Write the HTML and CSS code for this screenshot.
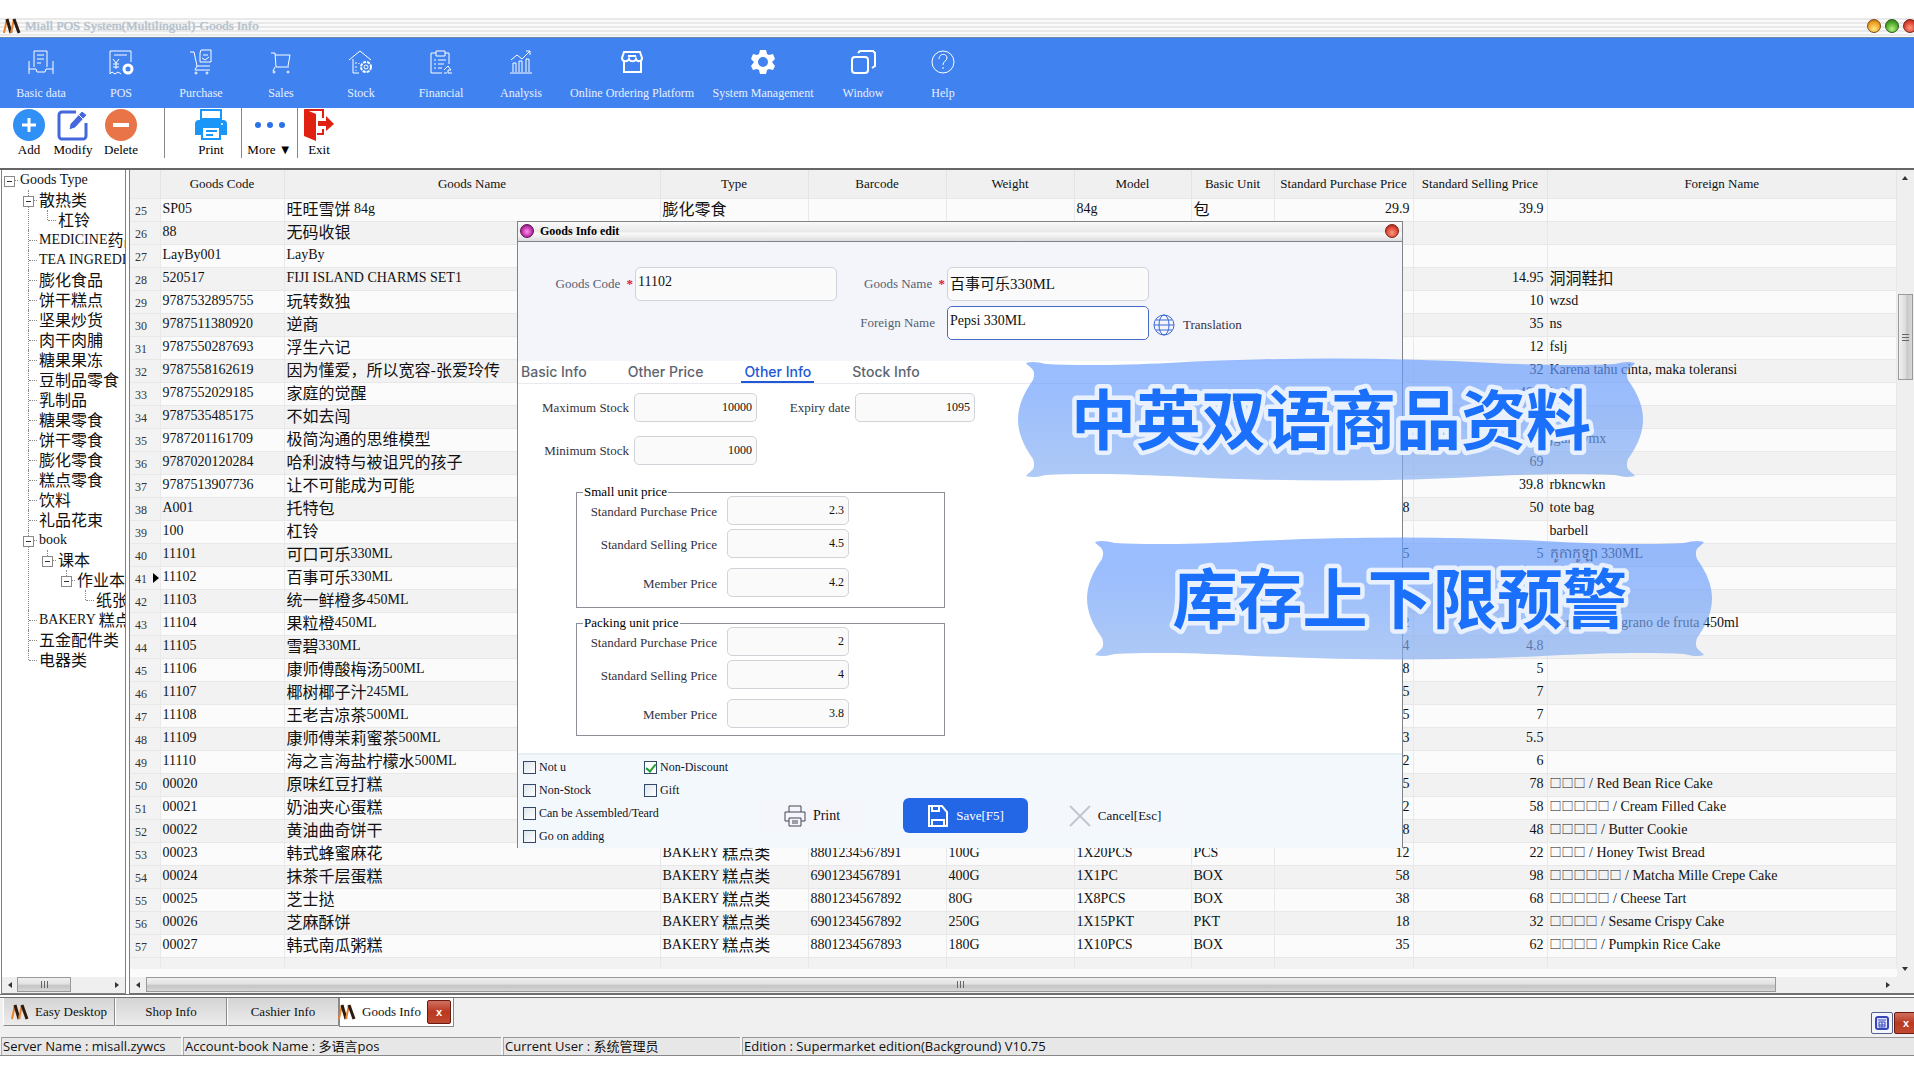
FILE: index.html
```html
<!DOCTYPE html>
<html lang="en">
<head>
<meta charset="utf-8">
<title>Miall POS System(Multilingual)-Goods Info</title>
<link rel="stylesheet" href="styles.css">
</head>
<body>
<svg class="defs" width="0" height="0" aria-hidden="true">
  <defs>
    <linearGradient id="ribbon-fill" x1="0" y1="0" x2="0" y2="1">
      <stop offset="0" stop-color="#649bff"/><stop offset=".3" stop-color="#689cfc"/><stop offset="1" stop-color="#85aef0"/>
    </linearGradient>
    <symbol id="logo" viewBox="0 0 18 16">
      <path d="M4 1L1 15" stroke="#e8832a" stroke-width="2" fill="none"/>
      <path d="M4 1l4 14" stroke="#2a1a10" stroke-width="3" fill="none"/>
      <path d="M11 1L8 15" stroke="#e8832a" stroke-width="2" fill="none"/>
      <path d="M11 1l5 14" stroke="#2a1a10" stroke-width="3" fill="none"/>
    </symbol>
    <symbol id="ribbon" viewBox="0 0 625 123">
      <path d="M8 5C14 3 20 4 28 6C60 8 110 7 150 5C260 -1 370 -1 475 5C515 7 565 8 597 6C605 4 611 3 617 5C614 10 606 10 610 22C630 50 630 73 610 101C606 113 614 113 617 118C611 120 605 119 597 117C565 115 515 116 475 118C370 124 260 124 150 118C110 116 60 115 28 117C20 119 14 120 8 118C11 113 19 113 15 101C-5 73 -5 50 15 22C19 10 11 10 8 5Z" fill="url(#ribbon-fill)" fill-opacity=".66"/>
    </symbol>
  </defs>
</svg>

<header class="titlebar">
  <svg class="logo" width="18" height="16"><use href="#logo"/></svg>
  <span class="titlebar-text">Miall POS System(Multilingual)-Goods Info</span>
  <button class="orb orb-yellow" aria-label="Minimize"></button>
  <button class="orb orb-green" aria-label="Restore"></button>
  <button class="orb orb-red" aria-label="Close"></button>
</header>

<nav class="mainnav">
  <button class="nav-item"><svg width="26" height="26" viewBox="0 0 26 26"><path d="M6 18V2h13v16M9 6h7M9 10h7M9 14h4M1 12v13M25 12v13M1 20h7l1 3h8l1-3h7"/></svg>Basic data</button>
  <button class="nav-item"><svg width="26" height="26" viewBox="0 0 26 26"><path d="M13 25l-3-2-3 2-3-2-2 2V2h21v11M6 6h13M5 10l3 4 3-4M8 14v6M5 15h6M5 18h6"/><circle cx="20" cy="20" r="4" stroke-width="3"/></svg>POS</button>
  <button class="nav-item"><svg width="26" height="26" viewBox="0 0 26 26"><path d="M2 3h4l3 14h13M13 1h10v12H12V4zM15 6h5M14 9l3 2 4-3M9 17l-2 4h15"/><circle cx="8" cy="24" r="1"/><circle cx="19" cy="24" r="1"/></svg>Purchase</button>
  <button class="nav-item"><svg width="26" height="26" viewBox="0 0 26 26"><path d="M3 4h4l1 14h13M7 6h15l-2 11M7 18l-2 4"/><circle cx="6" cy="23" r="1"/><circle cx="20" cy="23" r="1"/></svg>Sales</button>
  <button class="nav-item"><svg width="26" height="26" viewBox="0 0 26 26"><path d="M1 11L12 2l11 9M5 10v14h6M8 13v2M8 17v2M8 21v1M11 14v1"/><circle cx="18" cy="18" r="5" stroke-width="2" stroke-dasharray="3 1"/><circle cx="18" cy="18" r="2"/></svg>Stock</button>
  <button class="nav-item"><svg width="26" height="26" viewBox="0 0 26 26"><path d="M8 4H3v20h11M17 4h4v11M8 2h9v5H8zM6 11h2M10 11h8M6 15h2M10 15h6M6 19h2M10 19h4M16 21l4-4 3 4h-3v3h4M16 24h3"/></svg>Financial</button>
  <button class="nav-item"><svg width="26" height="26" viewBox="0 0 26 26"><path d="M2 24h22M5 23V14h3v9M11 23V12h3v11M18 23V10h3v13M3 11l6-5 5 4 8-8M18 2h4v4" /></svg>Analysis</button>
  <button class="nav-item nav-wide"><svg width="26" height="26" viewBox="0 0 26 26"><path stroke-width="2" d="M5 3h16l2 6c0 4-5 4-6 1c-1 3-6 3-7 0c-1 3-7 3-7-1zM5 12v11h17V12M9 7h8"/></svg>Online Ordering Platform</button>
  <button class="nav-item nav-mid"><svg width="26" height="26" viewBox="0 0 26 26"><path fill="#fff" stroke="none" fill-rule="evenodd" d="M10 1h6l1 4 2 1 4-1 2 5-3 3 3 4-2 4-4-1-2 1-1 4h-6l-1-4-2-1-4 1-2-4 3-4-3-3 2-5 4 1 2-1zM13 8a5 5 0 1 0 0 10a5 5 0 0 0 0-10z"/></svg>System Management</button>
  <button class="nav-item"><svg width="26" height="26" viewBox="0 0 26 26"><rect x="2" y="8" width="16" height="16" rx="3" stroke-width="2"/><path stroke-width="2" d="M8 4l2-2h13l2 2v13l-3 2"/></svg>Window</button>
  <button class="nav-item"><svg width="26" height="26" viewBox="0 0 26 26"><circle cx="13" cy="13" r="11"/><path d="M9 10c0-6 8-6 8-1c0 3-4 3-4 7M13 18v2"/></svg>Help</button>
</nav>

<div class="toolbar">
  <button class="tool tool-add"><svg width="32" height="32" viewBox="0 0 32 32"><circle cx="16" cy="16" r="16" fill="#3090f5"/><path d="M16 9v14M9 16h14" stroke="#fff" stroke-width="3"/></svg>Add</button>
  <button class="tool tool-modify"><svg width="32" height="32" viewBox="0 0 32 32"><path d="M19 3H5a3 3 0 0 0-3 3v21a3 3 0 0 0 3 3h21a3 3 0 0 0 3-3V14" fill="none" stroke="#4468dc" stroke-width="3"/><path d="M12 21l1-6L25 2l5 4-12 13zM22 6l4 4" fill="#4468dc" stroke="#fff" stroke-width="1"/></svg>Modify</button>
  <button class="tool tool-delete"><svg width="32" height="32" viewBox="0 0 32 32"><circle cx="16" cy="16" r="16" fill="#e87448"/><path d="M8 16h16" stroke="#fff" stroke-width="4"/></svg>Delete</button>
  <span class="rule"></span>
  <button class="tool tool-print"><svg width="32" height="32" viewBox="0 0 32 32"><path d="M6 10V1h20v9z" fill="#fff" stroke="#1a96f8" stroke-width="2"/><path d="M4 11h24q4 0 4 4v11h-6v-7H7v7H0V15q0-4 4-4z" fill="#1a96f8"/><path d="M7 18h18v12H7z" fill="#fff" stroke="#1a96f8" stroke-width="2"/><path d="M11 22h11M11 26h7" stroke="#1a96f8" stroke-width="2"/><circle cx="27" cy="15" r="1" fill="#fff"/></svg>Print</button>
  <span class="rule"></span>
  <button class="tool tool-more"><svg width="32" height="32" viewBox="0 0 32 32"><g fill="#2a72e8"><circle cx="4" cy="16" r="3"/><circle cx="16" cy="16" r="3"/><circle cx="28" cy="16" r="3"/></g></svg>More ▼</button>
  <span class="rule"></span>
  <button class="tool tool-exit"><svg width="32" height="32" viewBox="0 0 32 32"><path d="M1 0l12 5v27L1 27z" fill="#e02010"/><path d="M2 1h18v8M20 20v5h-6" fill="none" stroke="#e02010" stroke-width="2"/><path d="M15 12h8V7l8 8-8 7v-5h-8z" fill="#e02010"/></svg>Exit</button>
</div>

<main class="workspace">
  <aside class="tree-pane">
    <ul class="tree tree-root">
      <li><span class="node open">Goods Type</span>
        <ul class="tree">
          <li><span class="node open zh">散热类</span>
            <ul class="tree"><li><span class="node zh">杠铃</span></li></ul></li>
          <li><span class="node">MEDICINE<span class="zh">药品</span></span></li>
          <li><span class="node">TEA INGREDIENT</span></li>
          <li><span class="node zh">膨化食品</span></li>
          <li><span class="node zh">饼干糕点</span></li>
          <li><span class="node zh">坚果炒货</span></li>
          <li><span class="node zh">肉干肉脯</span></li>
          <li><span class="node zh">糖果果冻</span></li>
          <li><span class="node zh">豆制品零食</span></li>
          <li><span class="node zh">乳制品</span></li>
          <li><span class="node zh">糖果零食</span></li>
          <li><span class="node zh">饼干零食</span></li>
          <li><span class="node zh">膨化零食</span></li>
          <li><span class="node zh">糕点零食</span></li>
          <li><span class="node zh">饮料</span></li>
          <li><span class="node zh">礼品花束</span></li>
          <li><span class="node open">book</span>
            <ul class="tree"><li><span class="node open zh">课本</span>
              <ul class="tree"><li><span class="node open zh">作业本</span>
                <ul class="tree"><li><span class="node zh">纸张</span></li></ul></li></ul></li></ul></li>
          <li><span class="node">BAKERY <span class="zh">糕点类</span></span></li>
          <li><span class="node zh">五金配件类</span></li>
          <li><span class="node zh">电器类</span></li>
        </ul>
      </li>
    </ul>
    <div class="hbar tree-hbar"><span class="arrow left"></span><span class="hthumb tree-thumb"><i class="grip"></i></span><span class="arrow right"></span></div>
  </aside>

  <section class="grid-pane">
    <div class="grid-row">
      <div class="grid-body">
        <table class="goods">
          <colgroup><col class="c-no"><col class="c-code"><col class="c-name"><col class="c-type"><col class="c-bar"><col class="c-weight"><col class="c-model"><col class="c-unit"><col class="c-buy"><col class="c-sell"><col></colgroup>
          <thead><tr><th></th><th>Goods Code</th><th>Goods Name</th><th>Type</th><th>Barcode</th><th>Weight</th><th>Model</th><th>Basic Unit</th><th>Standard Purchase Price</th><th>Standard Selling Price</th><th>Foreign Name</th></tr></thead>
          <tbody>
            <tr><td>25</td><td>SP05</td><td><span class="zh">旺旺雪饼</span> 84g</td><td><span class="zh">膨化零食</span></td><td></td><td></td><td>84g</td><td><span class="zh">包</span></td><td>29.9</td><td>39.9</td><td></td></tr>
            <tr><td>26</td><td>88</td><td><span class="zh">无码收银</span></td><td></td><td></td><td></td><td></td><td></td><td></td><td></td><td></td></tr>
            <tr><td>27</td><td>LayBy001</td><td>LayBy</td><td></td><td></td><td></td><td></td><td></td><td></td><td></td><td></td></tr>
            <tr><td>28</td><td>520517</td><td>FIJI ISLAND CHARMS SET1</td><td></td><td></td><td></td><td></td><td></td><td></td><td>14.95</td><td><span class="zh">洞洞鞋扣</span></td></tr>
            <tr><td>29</td><td>9787532895755</td><td><span class="zh">玩转数独</span></td><td></td><td></td><td></td><td></td><td></td><td></td><td>10</td><td>wzsd</td></tr>
            <tr><td>30</td><td>9787511380920</td><td><span class="zh">逆商</span></td><td></td><td></td><td></td><td></td><td></td><td></td><td>35</td><td>ns</td></tr>
            <tr><td>31</td><td>9787550287693</td><td><span class="zh">浮生六记</span></td><td></td><td></td><td></td><td></td><td></td><td></td><td>12</td><td>fslj</td></tr>
            <tr><td>32</td><td>9787558162619</td><td><span class="zh">因为懂爱，所以宽容-张爱玲传</span></td><td></td><td></td><td></td><td></td><td></td><td></td><td>32</td><td>Karena tahu cinta, maka toleransi</td></tr>
            <tr><td>33</td><td>9787552029185</td><td><span class="zh">家庭的觉醒</span></td><td></td><td></td><td></td><td></td><td></td><td></td><td>48.8</td><td>itdi</td></tr>
            <tr><td>34</td><td>9787535485175</td><td><span class="zh">不如去闯</span></td><td></td><td></td><td></td><td></td><td></td><td></td><td>68</td><td></td></tr>
            <tr><td>35</td><td>9787201161709</td><td><span class="zh">极简沟通的思维模型</span></td><td></td><td></td><td></td><td></td><td></td><td></td><td></td><td>jguhkvmx</td></tr>
            <tr><td>36</td><td>9787020120284</td><td><span class="zh">哈利波特与被诅咒的孩子</span></td><td></td><td></td><td></td><td></td><td></td><td></td><td>69</td><td></td></tr>
            <tr><td>37</td><td>9787513907736</td><td><span class="zh">让不可能成为可能</span></td><td></td><td></td><td></td><td></td><td></td><td></td><td>39.8</td><td>rbkncwkn</td></tr>
            <tr><td>38</td><td>A001</td><td><span class="zh">托特包</span></td><td></td><td></td><td></td><td></td><td></td><td>38</td><td>50</td><td>tote bag</td></tr>
            <tr><td>39</td><td>100</td><td><span class="zh">杠铃</span></td><td></td><td></td><td></td><td></td><td></td><td></td><td></td><td>barbell</td></tr>
            <tr><td>40</td><td>11101</td><td><span class="zh">可口可乐</span>330ML</td><td></td><td></td><td></td><td></td><td></td><td>2.5</td><td>5</td><td>កូកាកូឡា 330ML</td></tr>
            <tr class="current"><td>41</td><td>11102</td><td><span class="zh">百事可乐</span>330ML</td><td></td><td></td><td></td><td></td><td></td><td></td><td></td><td></td></tr>
            <tr><td>42</td><td>11103</td><td><span class="zh">统一鲜橙多</span>450ML</td><td></td><td></td><td></td><td></td><td></td><td></td><td></td><td></td></tr>
            <tr><td>43</td><td>11104</td><td><span class="zh">果粒橙</span>450ML</td><td></td><td></td><td></td><td></td><td></td><td>2</td><td>5</td><td>Naranja con grano de fruta 450ml</td></tr>
            <tr><td>44</td><td>11105</td><td><span class="zh">雪碧</span>330ML</td><td></td><td></td><td></td><td></td><td></td><td>2.4</td><td>4.8</td><td></td></tr>
            <tr><td>45</td><td>11106</td><td><span class="zh">康师傅酸梅汤</span>500ML</td><td></td><td></td><td></td><td></td><td></td><td>2.8</td><td>5</td><td></td></tr>
            <tr><td>46</td><td>11107</td><td><span class="zh">椰树椰子汁</span>245ML</td><td></td><td></td><td></td><td></td><td></td><td>3.5</td><td>7</td><td></td></tr>
            <tr><td>47</td><td>11108</td><td><span class="zh">王老吉凉茶</span>500ML</td><td></td><td></td><td></td><td></td><td></td><td>3.5</td><td>7</td><td></td></tr>
            <tr><td>48</td><td>11109</td><td><span class="zh">康师傅茉莉蜜茶</span>500ML</td><td></td><td></td><td></td><td></td><td></td><td>3</td><td>5.5</td><td></td></tr>
            <tr><td>49</td><td>11110</td><td><span class="zh">海之言海盐柠檬水</span>500ML</td><td></td><td></td><td></td><td></td><td></td><td>3.2</td><td>6</td><td></td></tr>
            <tr><td>50</td><td>00020</td><td><span class="zh">原味红豆打糕</span></td><td></td><td></td><td></td><td></td><td></td><td>45</td><td>78</td><td><span class="box">□□□</span> / Red Bean Rice Cake</td></tr>
            <tr><td>51</td><td>00021</td><td><span class="zh">奶油夹心蛋糕</span></td><td></td><td></td><td></td><td></td><td></td><td>32</td><td>58</td><td><span class="box">□□□□□</span> / Cream Filled Cake</td></tr>
            <tr><td>52</td><td>00022</td><td><span class="zh">黄油曲奇饼干</span></td><td></td><td></td><td></td><td></td><td></td><td>28</td><td>48</td><td><span class="box">□□□□</span> / Butter Cookie</td></tr>
            <tr><td>53</td><td>00023</td><td><span class="zh">韩式蜂蜜麻花</span></td><td>BAKERY <span class="zh">糕点类</span></td><td>8801234567891</td><td>100G</td><td>1X20PCS</td><td>PCS</td><td>12</td><td>22</td><td><span class="box">□□□</span> / Honey Twist Bread</td></tr>
            <tr><td>54</td><td>00024</td><td><span class="zh">抹茶千层蛋糕</span></td><td>BAKERY <span class="zh">糕点类</span></td><td>6901234567891</td><td>400G</td><td>1X1PC</td><td>BOX</td><td>58</td><td>98</td><td><span class="box">□□□□□□</span> / Matcha Mille Crepe Cake</td></tr>
            <tr><td>55</td><td>00025</td><td><span class="zh">芝士挞</span></td><td>BAKERY <span class="zh">糕点类</span></td><td>8801234567892</td><td>80G</td><td>1X8PCS</td><td>BOX</td><td>38</td><td>68</td><td><span class="box">□□□□□</span> / Cheese Tart</td></tr>
            <tr><td>56</td><td>00026</td><td><span class="zh">芝麻酥饼</span></td><td>BAKERY <span class="zh">糕点类</span></td><td>6901234567892</td><td>250G</td><td>1X15PKT</td><td>PKT</td><td>18</td><td>32</td><td><span class="box">□□□□</span> / Sesame Crispy Cake</td></tr>
            <tr><td>57</td><td>00027</td><td><span class="zh">韩式南瓜粥糕</span></td><td>BAKERY <span class="zh">糕点类</span></td><td>8801234567893</td><td>180G</td><td>1X10PCS</td><td>BOX</td><td>35</td><td>62</td><td><span class="box">□□□□</span> / Pumpkin Rice Cake</td></tr>
            <tr class="filler"><td></td><td></td><td></td><td></td><td></td><td></td><td></td><td></td><td></td><td></td><td></td></tr>
          </tbody>
        </table>
      </div>
      <div class="vbar"><span class="arrow up"></span><span class="vthumb"><i class="grip"></i></span><span class="arrow down"></span></div>
    </div>
    <div class="hbar grid-hbar"><span class="arrow left"></span><span class="htrack"><span class="hthumb grid-thumb"><i class="grip"></i></span></span><span class="arrow right"></span></div>
  </section>
</main>

<div class="taskbar">
  <button class="task"><svg width="18" height="16"><use href="#logo"/></svg>Easy Desktop</button>
  <button class="task">Shop Info</button>
  <button class="task">Cashier Info</button>
  <div class="task task-active"><svg width="18" height="16"><use href="#logo"/></svg>Goods Info<button class="close" aria-label="Close tab">x</button></div>
  <div class="task-tools">
    <button class="cal" aria-label="Arrange windows"><svg width="14" height="14" viewBox="0 0 14 14"><rect x="1" y="1" width="12" height="12" rx="2" fill="#dfe6ff" stroke="#3a46b8" stroke-width="2"/><path d="M3 4h8M4 6h6v5H4zM7 6v5M4 9h6" stroke="#3a46b8" fill="none"/></svg></button>
    <button class="close" aria-label="Close window">x</button>
  </div>
</div>

<footer class="status">
  <span class="st st-server">Server Name : misall.zywcs</span>
  <span class="st st-book">Account-book Name : 多语言pos</span>
  <span class="st st-user">Current User : 系统管理员</span>
  <span class="st st-edition">Edition : Supermarket edition(Background) V10.75</span>
</footer>

<form class="dialog" role="dialog" aria-labelledby="dlg-title">
  <div class="dlg-title"><span class="orb orb-pink"></span><span id="dlg-title">Goods Info edit</span><button type="button" class="orb orb-red" aria-label="Close"></button></div>
  <div class="dlg-head">
    <label for="code">Goods Code <b>*</b></label><input id="code" class="field" value="11102">
    <label for="name">Goods Name <b>*</b></label><input id="name" class="field field-zh" value="百事可乐330ML">
    <label for="foreign" class="l-foreign">Foreign Name</label><input id="foreign" class="field focused" value="Pepsi 330ML">
    <button type="button" class="translate"><svg width="22" height="22" viewBox="0 0 22 22" fill="none" stroke="#3a68d8"><circle cx="11" cy="11" r="10"/><ellipse cx="11" cy="11" rx="5" ry="10"/><path d="M1 11h20M3 6h16M3 16h16"/></svg>Translation</button>
  </div>
  <div class="tabs" role="tablist">
    <button type="button" role="tab" class="tab">Basic Info</button>
    <button type="button" role="tab" class="tab">Other Price</button>
    <button type="button" role="tab" class="tab selected" aria-selected="true">Other Info</button>
    <button type="button" role="tab" class="tab">Stock Info</button>
  </div>
  <div class="dlg-body">
    <div class="stock">
      <label for="max">Maximum Stock</label><input id="max" class="field num" value="10000">
      <label for="exp">Expiry date</label><input id="exp" class="field num" value="1095">
      <label for="min">Minimum Stock</label><input id="min" class="field num" value="1000">
    </div>
    <fieldset class="prices">
      <legend>Small unit price</legend>
      <div class="price-rows">
        <label for="s1">Standard Purchase Price</label><input id="s1" class="field num" value="2.3">
        <label for="s2">Standard Selling Price</label><input id="s2" class="field num" value="4.5">
        <label for="s3">Member Price</label><input id="s3" class="field num" value="4.2">
      </div>
    </fieldset>
    <fieldset class="prices">
      <legend>Packing unit price</legend>
      <div class="price-rows">
        <label for="p1">Standard Purchase Price</label><input id="p1" class="field num" value="2">
        <label for="p2">Standard Selling Price</label><input id="p2" class="field num" value="4">
        <label for="p3">Member Price</label><input id="p3" class="field num" value="3.8">
      </div>
    </fieldset>
  </div>
  <div class="dlg-foot">
    <div class="checks">
      <label><input type="checkbox">Not u</label><label><input type="checkbox" checked>Non-Discount</label>
      <label><input type="checkbox">Non-Stock</label><label><input type="checkbox">Gift</label>
      <label class="wide"><input type="checkbox">Can be Assembled/Teardown</label>
      <label class="wide"><input type="checkbox">Go on adding</label>
    </div>
    <button type="button" class="act act-print"><svg width="22" height="22" viewBox="0 0 22 22" fill="none" stroke="#445"><path d="M5 7V1h12v6M5 16H1V7h20v9h-4M5 13h12v8H5zM8 16h6M8 18h6"/></svg>Print</button>
    <button type="submit" class="act act-save"><svg width="22" height="22" viewBox="0 0 22 22" fill="none" stroke="#fff" stroke-width="2"><path d="M2 1h13l5 6v14H2zM5 21v-6h12v6M5 1v5h7V1"/></svg>Save[F5]</button>
    <button type="button" class="act act-cancel"><svg width="22" height="22" viewBox="0 0 22 22" fill="none" stroke="#c2c6ce" stroke-width="2"><path d="M1 1l20 20M21 1L1 21"/></svg>Cancel[Esc]</button>
  </div>
</form>

<div class="banner banner-one"><svg viewBox="0 0 625 123"><use href="#ribbon"/><text x="313" y="86">中英双语商品资料</text></svg></div>
<div class="banner banner-two"><svg viewBox="0 0 625 123"><use href="#ribbon"/><text x="313" y="86">库存上下限预警</text></svg></div>
</body>
</html>
```
FILE: styles.css
```css
* { box-sizing: border-box; }
body {
  margin: 0;
  padding-top: 18px;
  position: relative;
  overflow-x: hidden;
  background: #fff;
  color: #111;
  font: 13px/16px "Liberation Serif", "Noto Sans CJK SC", serif;
}
button { font: inherit; color: inherit; border: 0; padding: 0; background: none; }
.defs { position: absolute; }
.zh { font-size: 16px; font-family: "Noto Sans CJK SC", sans-serif; }
.box { font-family: "Noto Sans CJK SC", sans-serif; font-size: 12px; line-height: 14px; }

/* window title */
.titlebar {
  display: flex;
  align-items: center;
  height: 20px;
  padding: 0 0 4px 3px;
  overflow: hidden;
  border-bottom: 1px solid #6c86a8;
  background: repeating-linear-gradient(#e9e9e9 0 2px, #fafafa 2px 4px);
}
.logo { flex: none; }
.titlebar-text { flex: 1; margin-left: 4px; font-size: 13px; color: #b4c0cc; text-shadow: 0 0 1px #b4c0cc; }
.orb { flex: none; width: 14px; height: 14px; border-radius: 50%; border: 1px solid #7a4a20; }
.titlebar .orb { margin-left: 4px; }
.titlebar .orb-red { margin-right: -3px; }
.orb-yellow { background: radial-gradient(circle at 50% 75%, #ffe880, #f0a020 60%, #a05a10); }
.orb-green { border-color: #2a5a18; background: radial-gradient(circle at 50% 75%, #b8f080, #48a828 60%, #2a6a18); }
.orb-red { border-color: #7a2018; background: radial-gradient(circle at 50% 65%, #ff9a80, #d84030 60%, #8a1c14); }
.orb-pink { border-color: #5a1050; background: radial-gradient(circle at 50% 55%, #ff90f0, #c030a8 55%, #5a1050); }

/* main navigation */
.mainnav { display: flex; height: 70px; padding-left: 1px; background: #4082f0; color: #e8f0ff; font-size: 12px; }
.nav-item { flex: none; display: flex; flex-direction: column; align-items: center; gap: 10px; width: 80px; padding-top: 11px; }
.nav-item svg { fill: none; stroke: #fff; }
.nav-wide { width: 142px; }
.nav-mid { width: 120px; }

/* toolbar */
.toolbar { display: flex; height: 62px; padding-left: 9px; border-bottom: 2px solid #666; color: #000; }
.tool { flex: none; display: flex; flex-direction: column; align-items: center; gap: 1px; width: 48px; height: 58px; padding-top: 1px; }
.tool-add { width: 40px; }
.tool-modify, .tool-delete { width: 48px; }
.tool-print { width: 60px; margin-left: 16px; }
.tool-more { width: 55px; }
.tool-exit { width: 42px; }
.rule { width: 1px; height: 50px; background: #888; }
.tool-delete + .rule { margin-left: 19px; }

/* workspace */
.workspace { display: flex; gap: 3px; padding-left: 1px; background: #fff; border-bottom: 1px solid #707070; }
.tree-pane { flex: none; width: 125px; display: flex; flex-direction: column; overflow: hidden; border: 1px solid #808080; border-top: 0; font-size: 14px; }
.tree { list-style: none; margin: 0; padding: 0 0 0 19px; }
.tree-root { flex: 1; padding-left: 0; margin-left: -2px; }
.tree li { position: relative; }
.tree .tree > li::before { content: ""; position: absolute; left: 9px; top: 0; bottom: 0; border-left: 1px dotted #888; }
.tree .tree > li:last-child::before { bottom: auto; height: 10px; }
.node { display: block; position: relative; height: 20px; line-height: 20px; padding-left: 20px; white-space: nowrap; }
.node.zh { line-height: 18px; }
.node .zh { line-height: 18px; vertical-align: top; }
.node::before { content: ""; position: absolute; left: 10px; top: 10px; width: 8px; border-top: 1px dotted #888; }
.node.open::after {
  content: ""; position: absolute; left: 4px; top: 6px; width: 9px; height: 9px; border: 1px solid #888;
  background: linear-gradient(#333, #333) center / 5px 1px no-repeat #fff;
}
.grid-pane { flex: 1; min-width: 0; display: flex; flex-direction: column; border-left: 1px solid #808080; border-bottom: 1px solid #707070; }
.grid-row { display: flex; flex: 1; }
.grid-body { flex: 1; min-width: 0; background: #fbfbfb; padding-bottom: 8px; }
.goods { width: 100%; border-collapse: collapse; table-layout: fixed; font-size: 14px; line-height: 18px; }
.c-no { width: 30px; } .c-code { width: 124px; } .c-name { width: 376px; } .c-type { width: 148px; }
.c-bar { width: 138px; } .c-weight { width: 128px; } .c-model { width: 117px; } .c-unit { width: 83px; }
.c-buy { width: 139px; } .c-sell { width: 134px; }
.goods th { height: 28px; padding: 0; font-weight: normal; font-size: 13px; white-space: nowrap; background: #f0f0f0; border-right: 1px solid #e4e4e4; }
.goods td { height: 23px; padding: 0 3px 1px 2px; white-space: nowrap; border-right: 1px solid #e9e9e9; border-top: 1px solid #e8e8e8; }
.goods td .zh { line-height: 16px; vertical-align: top; }
.goods tr:nth-child(even) td { background: #f2f2f2; }
.goods td:first-child { font-size: 12px; padding: 3px 0 0 5px; background: #f3f3f3; color: #333; position: relative; }
.goods td:nth-child(9), .goods td:nth-child(10) { text-align: right; }
.goods .filler td { height: 12px; background: #fbfbfb; }
.goods .current td:first-child::after { content: ""; position: absolute; left: 23px; top: 6px; border: 5px solid transparent; border-left: 6px solid #000; border-right: 0; }

/* scroll bars */
.arrow { flex: none; width: 16px; height: 16px; display: grid; place-items: center; }
.arrow::before { content: ""; border: 3px solid transparent; }
.arrow.left::before { border-left: 0; border-right: 4px solid #333; }
.arrow.right::before { border-right: 0; border-left: 4px solid #333; }
.arrow.up::before { border-top: 0; border-bottom: 4px solid #333; }
.arrow.down::before { border-bottom: 0; border-top: 4px solid #333; }
.hbar { display: flex; height: 16px; background: #efefef; }
.tree-hbar .right { margin-left: auto; }
.hthumb { display: grid; place-items: center; height: 15px; border: 1px solid #999; background: linear-gradient(#f0f0f0, #e2e2e2 45%, #c4c4c4 60%, #d8d8d8); }
.tree-thumb { width: 54px; margin-left: -1px; }
.htrack { flex: 1; }
.grid-hbar .right { margin-right: 18px; }
.grid-thumb { width: 94%; }
.grip { width: 7px; height: 7px; background: repeating-linear-gradient(90deg, #666 0 1px, transparent 1px 3px); }
.vbar { flex: none; width: 17px; display: flex; flex-direction: column; background: #efefef; }
.vthumb { display: grid; place-items: center; width: 15px; height: 86px; margin: 108px 0 auto 1px; border: 1px solid #999; background: linear-gradient(90deg, #f0f0f0, #dcdcdc 50%, #c8c8c8 60%, #d8d8d8); }
.vthumb .grip { background: repeating-linear-gradient(#666 0 1px, transparent 1px 3px); }

/* window tabs */
.taskbar { display: flex; align-items: flex-start; height: 40px; margin-top: 2px; padding-left: 3px; border-top: 1px solid #707070; background: #f0f0f0; }
.task { display: flex; align-items: center; justify-content: center; gap: 6px; width: 112px; height: 28px; white-space: nowrap; border: 1px solid #8a8a8a; border-top: 0; border-left-color: #fff; background: linear-gradient(#d4d4d4, #ececec); }
.task svg { flex: none; }
.task-active { width: 115px; height: 29px; padding-right: 4px; border-left-color: #8a8a8a; background: #fff; }
.close { flex: none; width: 24px; height: 24px; border: 1px solid #6a1a10; border-radius: 2px; background: linear-gradient(#d07060, #b83820 50%, #c04a30); color: #fff; font: bold 11px/14px "Liberation Sans", sans-serif; }
.task-tools { display: flex; gap: 1px; margin: 14px -4px 0 auto; }
.task-tools .close { height: 22px; }
.cal { display: grid; place-items: center; width: 22px; height: 22px; border: 1px solid #55608a; border-radius: 2px; background: #f4f6ff; }

/* status bar */
.status { display: flex; gap: 2px; height: 19px; padding-left: 1px; border-bottom: 1px solid #888; background: #f4f4f4; font: 13px/16px "Open Sans", "Noto Sans CJK SC", sans-serif; }
.st { border-top: 1px solid #999; border-left: 1px solid #aaa; padding-left: 1px; background: #e7e7e7; white-space: nowrap; }
.st-server { width: 180px; }
.st-book { width: 318px; }
.st-user { width: 237px; }
.st-edition { flex: 1; }

/* goods dialog */
.dialog { position: absolute; left: 517px; top: 221px; width: 886px; border: 1px solid #808488; border-bottom: 0; background: #fff; color: #334; }
.dlg-title { display: flex; align-items: center; gap: 6px; height: 20px; padding: 0 3px 2px 2px; border-bottom: 1px solid #80848c; background: linear-gradient(#fafafa, #e9e9e9 50%, #fafafa 60%, #dcdcdc); color: #000; font-weight: bold; font-size: 12px; }
.dlg-title .orb-red { margin-left: auto; }
.field { width: 100%; height: 29px; border: 1px solid #d0d3d8; border-radius: 5px; background: #fafafb; color: #111; font: 14px/18px "Liberation Serif", "Noto Sans CJK SC", serif; padding: 0 4px 4px 2px; outline: 0; }
.field.field-zh { font-size: 15px; }
.field.num { text-align: right; font-size: 12px; padding: 0 4px 1px; }
.dlg-head { display: grid; grid-template-columns: 116px 202px 108px 202px auto; column-gap: 1px; row-gap: 5px; align-items: center; height: 119px; padding-top: 25px; align-content: start; background: #f4f5fa; color: #556070; }
.dlg-head label { text-align: right; padding-right: 1px; }
.dlg-head label b { margin-left: 3px; color: #e02020; }
.dlg-head .field { height: 34px; }
.dlg-head .l-foreign { grid-column: 3; padding-right: 11px; }
.field.focused { border-color: #4a6ac8; background: #fff; }
.translate { display: flex; align-items: center; gap: 8px; margin: 4px 0 0 3px; color: #334; }
.tabs { display: flex; gap: 35px; height: 23px; padding-left: 0; border-bottom: 1px solid #e8eaf0; }
.tab { padding: 2px 3px 0; border-bottom: 2px solid transparent; font: 500 14px/18px Inter, sans-serif; color: #5c6470; }
.tab.selected { color: #2058d8; border-color: #2058d8; }
.dlg-body { padding: 9px 0 17px; }
.stock { display: grid; grid-template-columns: 111px 123px 88px 120px; column-gap: 5px; row-gap: 14px; align-items: center; text-align: right; }
.prices { width: 369px; margin: 22px 0 0 58px; padding: 0 0 10px; border: 1px solid #8c9096; }
.prices + .prices { margin-top: 10px; padding-bottom: 7px; }
.prices legend { margin-left: 6px; padding: 0 1px; line-height: 10px; color: #000; }
.price-rows { display: grid; grid-template-columns: 140px 122px; grid-template-rows: 33px 39px 29px; column-gap: 10px; margin-top: -1px; text-align: right; }
.price-rows label { line-height: 31px; }
.dlg-foot { display: flex; align-items: center; height: 95px; padding-left: 5px; border-top: 2px solid #e6eef6; background: #f3f8fd; color: #112; }
.checks { display: grid; grid-template-columns: 121px 115px; grid-auto-rows: 23px; align-items: center; font-size: 12px; }
.checks label { display: flex; align-items: center; gap: 3px; white-space: nowrap; overflow: hidden; }
.checks .wide { grid-column: 1; width: 136px; }
.checks input { flex: none; appearance: none; width: 13px; height: 13px; margin: 0; border: 1px solid #34486a; background: linear-gradient(135deg, #dce6ee, #fff); }
.checks input:checked { display: grid; place-items: start center; background: #fff; }
.checks input:checked::before { content: ""; width: 4px; height: 8px; border: solid #20a030; border-width: 0 2px 2px 0; transform: rotate(40deg); }
.act { flex: none; display: flex; align-items: center; justify-content: center; gap: 7px; height: 35px; margin-top: 28px; border-radius: 6px; }
.act-print { width: 106px; height: 32px; background: #f4f6fb; font-size: 14px; }
.act-save { width: 125px; margin-left: 38px; background: #2467e6; color: #fff; }
.act-cancel { width: 140px; height: 32px; margin-left: 17px; background: #f4f8fc; }

/* caption ribbons */
.banner { position: absolute; width: 625px; }
.banner svg { display: block; width: 100%; }
.banner text { font: 700 65px "Noto Sans CJK SC", sans-serif; text-anchor: middle; fill: #1a70fa; stroke: #e8f1fd; stroke-width: 9px; stroke-linejoin: round; paint-order: stroke fill; }
.banner-one { left: 1018px; top: 358px; }
.banner-two { left: 1087px; top: 537px; }
```
